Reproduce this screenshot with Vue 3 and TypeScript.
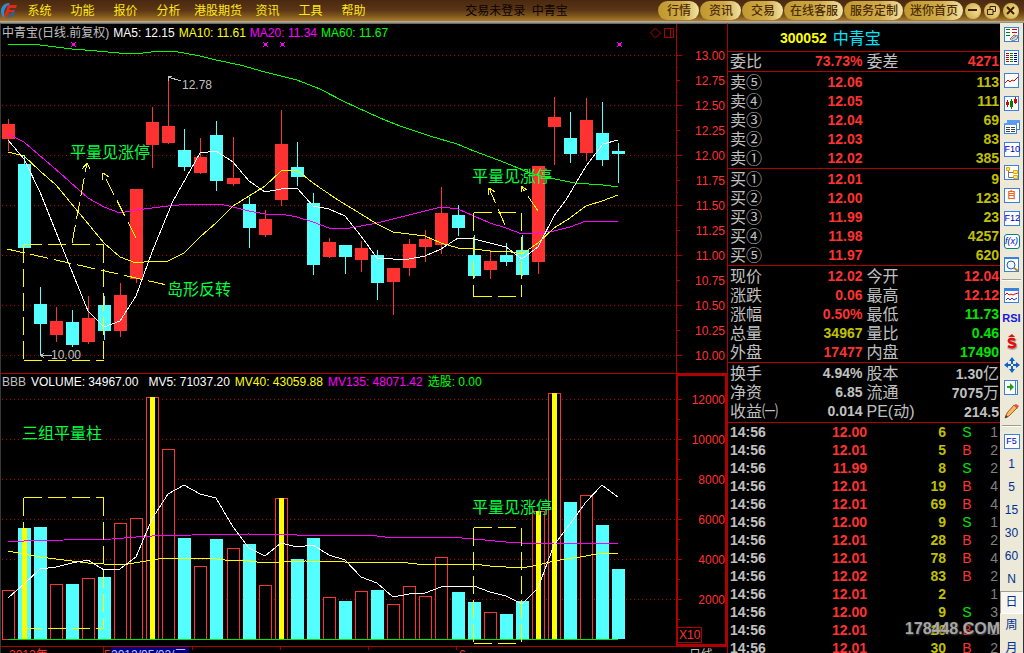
<script setup lang="ts">
type Candle = [up: 0 | 1, high: number, top: number, bottom: number, low: number, volume: number]
type Point = [number, number]

const menus = ['系统', '功能', '报价', '分析', '港股期货', '资讯', '工具', '帮助']
const shortcuts = ['行情', '资讯', '交易', '在线客服', '服务定制', '迷你首页']

const priceLegend = [
  { text: 'MA5: 12.15', tone: 'white' },
  { text: 'MA10: 11.61', tone: 'yellow' },
  { text: 'MA20: 11.34', tone: 'magenta' },
  { text: 'MA60: 11.67', tone: 'green' },
]
const volumeLegend = [
  { text: 'MV5: 71037.20', tone: 'white' },
  { text: 'MV40: 43059.88', tone: 'yellow' },
  { text: 'MV135: 48071.42', tone: 'magenta' },
  { text: '选股: 0.00', tone: 'green' },
]

// Levels are window rows; the last column is the top of the volume bar.
const candles: Candle[] = [
  [1, 119, 124, 139, 151, 590], [0, 155, 164, 248, 248, 528], [0, 287, 304, 324, 355, 527],
  [1, 307, 321, 335, 342, 584], [0, 310, 322, 345, 347, 584], [1, 296, 318, 342, 344, 578],
  [0, 296, 305, 331, 340, 577], [1, 283, 295, 331, 337, 523], [1, 189, 189, 279, 283, 518],
  [1, 107, 122, 145, 168, 397], [1, 79, 126, 143, 144, 449], [0, 129, 150, 167, 171, 538],
  [1, 138, 157, 173, 174, 566], [0, 121, 135, 181, 191, 539], [1, 137, 178, 184, 186, 548],
  [0, 197, 204, 228, 248, 544], [1, 210, 219, 235, 237, 585], [1, 110, 144, 200, 206, 498],
  [0, 142, 167, 177, 186, 559], [0, 193, 203, 265, 275, 538], [1, 238, 242, 257, 258, 597],
  [0, 245, 245, 257, 274, 601], [1, 241, 248, 260, 272, 591], [0, 250, 255, 283, 300, 590],
  [1, 268, 268, 282, 315, 604], [1, 239, 244, 268, 276, 586], [1, 230, 239, 247, 262, 596],
  [1, 187, 213, 245, 254, 557], [0, 205, 215, 228, 236, 592], [0, 235, 255, 276, 278, 602],
  [1, 250, 261, 270, 279, 612], [0, 243, 255, 262, 266, 614], [0, 235, 250, 275, 276, 601],
  [1, 166, 166, 262, 274, 511], [1, 97, 117, 127, 165, 393], [0, 112, 138, 154, 163, 502],
  [1, 98, 120, 153, 161, 495], [0, 102, 133, 160, 166, 525], [0, 143, 151, 154, 183, 569],
]
const marked = [1, 9, 17, 33, 34]
const VOLUME_BASE = 639

const centre = (i: number) => 8 + 16 * i + (i > 13 ? 1 : 0) + (i > 27 ? 1 : 0)
const line = (points: Point[]) => points.map(([x, y]) => `${x},${y}`).join(' ')

const bars = candles.map(([up, high, top, bottom, low, volume], i) => ({
  x: centre(i),
  tone: up ? 'up' : 'down',
  up: up === 1,
  high,
  top,
  bottom,
  low,
  volume,
  marked: marked.includes(i),
}))

const priceLines = [
  { tone: 'green', points: line([[8, 44], [32, 44], [72, 49], [97, 51], [119, 53], [143, 53], [160, 51], [173, 51], [200, 56], [216, 60], [240, 65], [265, 72], [297, 80], [320, 89], [345, 102], [380, 118], [400, 126], [430, 136], [457, 144], [474, 151], [506, 163], [530, 173], [545, 177], [560, 180], [575, 183], [603, 185], [618, 187]]) },
  { tone: 'magenta', points: line([[8, 134], [24, 142], [60, 173], [88, 198], [104, 207], [120, 213], [136, 210], [152, 208], [168, 206], [190, 204], [220, 204], [233, 207], [249, 211], [265, 214], [281, 214], [297, 217], [313, 222], [329, 228], [345, 229], [361, 226], [377, 223], [393, 219], [409, 215], [425, 211], [441, 207], [458, 209], [474, 216], [490, 223], [506, 228], [522, 234], [538, 233], [554, 231], [570, 227], [586, 221], [602, 222], [618, 221]]) },
  { tone: 'yellow', points: line([[8, 152], [24, 156], [40, 171], [56, 185], [104, 243], [120, 257], [136, 263], [152, 261], [168, 261], [184, 253], [200, 237], [216, 223], [233, 206], [249, 196], [265, 186], [281, 171], [297, 170], [313, 183], [338, 200], [361, 214], [377, 224], [393, 232], [409, 234], [425, 236], [441, 243], [458, 248], [474, 249], [490, 251], [506, 251], [522, 254], [538, 243], [554, 228], [570, 218], [586, 206], [602, 201], [618, 195]]) },
  { tone: 'white', points: line([[8, 140], [24, 159], [40, 192], [56, 232], [88, 311], [104, 327], [120, 321], [136, 296], [152, 252], [173, 201], [200, 153], [216, 151], [233, 162], [249, 181], [265, 192], [281, 189], [297, 188], [313, 206], [329, 209], [345, 216], [361, 236], [377, 258], [393, 259], [409, 259], [425, 256], [441, 249], [458, 238], [474, 239], [490, 243], [506, 247], [522, 259], [538, 247], [554, 216], [566, 200], [586, 166], [603, 144], [618, 140]]) },
]
const volumeLines = [
  { tone: 'magenta', points: line([[8, 542], [24, 541], [64, 540], [112, 539], [136, 537], [152, 536], [192, 535], [249, 534], [265, 535], [281, 534], [297, 535], [368, 535], [385, 537], [449, 537], [474, 539], [506, 542], [538, 544], [554, 543], [618, 543]]) },
  { tone: 'yellow', points: line([[8, 551], [24, 554], [40, 557], [88, 563], [104, 564], [128, 564], [152, 560], [165, 558], [208, 558], [225, 560], [249, 561], [265, 563], [281, 562], [305, 561], [345, 562], [400, 562], [425, 565], [474, 564], [490, 566], [522, 568], [538, 565], [554, 561], [586, 556], [602, 553], [618, 553]]) },
  { tone: 'white', points: line([[8, 598], [24, 584], [40, 569], [56, 567], [72, 563], [88, 560], [104, 570], [120, 569], [136, 557], [152, 519], [168, 494], [184, 485], [200, 494], [216, 498], [233, 527], [249, 548], [265, 556], [281, 543], [297, 547], [313, 545], [329, 555], [345, 560], [361, 577], [377, 583], [393, 597], [409, 594], [425, 593], [441, 587], [474, 586], [490, 592], [506, 596], [522, 604], [538, 588], [554, 545], [570, 524], [586, 502], [602, 485], [618, 497]]) },
]

const priceGrid = [55, 105, 155, 205, 255, 305, 355]
const volumeGrid = [399, 439, 479, 519, 559, 599]
const priceScale = Array.from({ length: 13 }, (_, i) => ({ y: 55 + 25 * i, label: (13 - 0.25 * i).toFixed(2), long: i % 2 === 0 }))
const priceMinor = Array.from({ length: 12 }, (_, i) => 67 + 25 * i)
const volumeScale = volumeGrid.map((y, i) => ({ y, label: String(12000 - 2000 * i) }))
const signals = [73, 265, 282, 619]

const asks = [['卖⑤', '12.06', '113'], ['卖④', '12.05', '111'], ['卖③', '12.04', '69'], ['卖②', '12.03', '83'], ['卖①', '12.02', '385']]
const bids = [['买①', '12.01', '9'], ['买②', '12.00', '123'], ['买③', '11.99', '23'], ['买④', '11.98', '4257'], ['买⑤', '11.97', '620']]
const stats = [
  ['现价', '12.02', 'red', '今开', '12.04', 'red'],
  ['涨跌', '0.06', 'red', '最高', '12.12', 'red'],
  ['涨幅', '0.50%', 'red', '最低', '11.73', 'lime'],
  ['总量', '34967', 'olive', '量比', '0.46', 'lime'],
  ['外盘', '17477', 'red', '内盘', '17490', 'lime'],
]
const basics = [
  ['换手', '4.94%', '股本', '1.30', '亿'],
  ['净资', '6.85', '流通', '7075', '万'],
  ['收益㈠', '0.014', 'PE(动)', '214.5', ''],
]
const ticks = [
  ['12.00', '6', 'S', '1'], ['12.01', '5', 'B', '2'], ['11.99', '8', 'S', '2'], ['12.01', '19', 'B', '4'],
  ['12.01', '69', 'B', '4'], ['12.00', '9', 'S', '1'], ['12.01', '28', 'B', '2'], ['12.01', '78', 'B', '4'],
  ['12.02', '83', 'B', '2'], ['12.01', '2', '', '1'], ['12.00', '9', 'S', '3'], ['12.01', '20', 'B', '1'],
  ['12.01', '30', 'B', '2'],
]
const periods = ['1', '5', '15', '30', '60', 'N', '日', '周', '月']
</script>

<template>
  <div class="app">
    <header class="topbar">
      <svg class="logo" width="17" height="17" viewBox="0 0 17 17" aria-hidden="true">
        <path d="M8 1C3 1 0 5 0 9c0 3 1 5 3 7l1-1C2 11 3 5 9 2z" fill="#2a8fd0" />
        <path d="M5 16c5 0 9-3 9-8l-3 1c0 3-2 5-6 7z" fill="#1668b4" />
        <path d="M7 3h9l-1 3H9L8 8h6l-2 2H8l-3 5H3L6 6z" fill="#e5261c" />
      </svg>
      <nav class="menu">
        <button v-for="m in menus" :key="m" type="button">{{ m }}</button>
      </nav>
      <div class="caption">交易未登录&nbsp; 中青宝</div>
      <nav class="pills">
        <button v-for="s in shortcuts" :key="s" type="button">{{ s }}</button>
      </nav>
      <div class="controls">
        <button type="button" aria-label="最小化">
          <svg width="15" height="15" viewBox="0 0 15 15"><path d="M3 7h9" /></svg>
        </button>
        <button type="button" aria-label="还原">
          <svg width="15" height="15" viewBox="0 0 15 15"><path d="M6 6V3.5h5.500v5H9M3.500 6.500h5.500v5H3.500z" /></svg>
        </button>
        <button type="button" aria-label="关闭">
          <svg width="15" height="15" viewBox="0 0 15 15"><path d="M4 4l7 7M11 4l-7 7" /></svg>
        </button>
      </div>
    </header>

    <div class="body">
      <main class="chart">
        <section class="pane price">
          <div class="plot">
            <div class="legend dense">
              <span class="grey">中青宝(日线.前复权)</span>
              <span v-for="l in priceLegend" :key="l.text" :class="l.tone">{{ l.text }}</span>
              <svg class="tools" width="24" height="12" viewBox="0 0 24 12" aria-hidden="true">
                <path d="M5.500 1l5 5-5 5-5-5zM14.500 1.500h9v9h-9zM20.500 1.500v9" />
              </svg>
            </div>
            <svg class="canvas price-canvas">
              <g transform="translate(-1 -41)">
                <line v-for="y in priceGrid" :key="y" class="grid" x1="2" x2="100%" :y1="y + 0.5" :y2="y + 0.5" />
                <g v-for="b in bars" :key="b.x" :class="b.tone">
                  <rect :x="b.x" :y="b.high" width="1" :height="b.low - b.high" />
                  <rect :x="b.x - 6" :y="b.top" width="13" :height="b.bottom - b.top" />
                </g>
                <polyline v-for="l in priceLines" :key="l.tone" :class="['curve', l.tone]" :points="l.points" />
                <g v-for="x in signals" :key="x" class="signal" :transform="`translate(${x} 44)`">
                  <rect x="-1" y="-1" width="3" height="3" />
                  <path d="M-2 -2h1v1h-1zM2 -2h1v1h-1zM-2 2h1v1h-1zM2 2h1v1h-1z" />
                </g>
                <g class="note">
                  <path d="M23.5 244.5H103.5M103.5 244.5V360.5M23.5 244.5V360.5M23.5 360.5H103.5" />
                  <path d="M7 249L167 285M72 243L87 163M136 238L103 173" />
                  <path d="M473.5 212.5H521.5M521.5 212.5V296.5M473.5 212.5V296.5M473.5 296.5H521.5" />
                  <path d="M505 225L489 188M538 211L521 186" />
                </g>
                <g class="head">
                  <path d="M82 169L87 163L90 169M102 180L103 173L109 177M488 195L489 188L495 192M521 192V186L527 190" />
                </g>
                <g class="arrow">
                  <path d="M181 81L168 77M172 76H168V81M52 355.5H41M44 353L41 355.5L44 358" />
                </g>
                <text class="mark" x="182" y="89">12.78</text>
                <text class="mark" x="51" y="359">10.00</text>
                <text class="hint" x="70" y="158">平量见涨停</text>
                <text class="hint" x="472" y="182">平量见涨停</text>
                <text class="hint" x="167" y="295">岛形反转</text>
              </g>
            </svg>
          </div>
          <svg class="axis price-axis">
            <g transform="translate(-676 -24)">
              <path class="rule" d="M676.5 24V374" />
              <g v-for="s in priceScale" :key="s.y">
                <path class="rule" :d="`M677 ${s.y}.5h${s.long ? 5 : 3}`" />
                <text x="725" :y="s.y + 5">{{ s.label }}</text>
              </g>
              <path v-for="y in priceMinor" :key="y" class="rule" :d="`M677 ${y}.5h1`" />
            </g>
          </svg>
        </section>

        <section class="pane volume">
          <div class="plot">
            <div class="legend">
              <span class="grey">BBB</span>
              <span class="white wide">VOLUME: 34967.00</span>
              <span v-for="l in volumeLegend" :key="l.text" :class="l.tone">{{ l.text }}</span>
            </div>
            <svg class="canvas volume-canvas">
              <g transform="translate(-1 -391)">
                <line v-for="y in volumeGrid" :key="y" class="grid" x1="2" x2="100%" :y1="y + 0.5" :y2="y + 0.5" />
                <g v-for="b in bars" :key="b.x">
                  <rect v-if="b.up" class="hollow" :x="b.x - 5.5" :y="b.volume + 0.5" width="12" :height="VOLUME_BASE - b.volume" />
                  <rect v-else class="solid" :x="b.x - 6" :y="b.volume" width="13" :height="VOLUME_BASE - b.volume" />
                  <rect v-if="b.marked" class="strip" :x="b.x - 2" :y="b.volume" width="5" :height="VOLUME_BASE - b.volume" />
                </g>
                <path class="base" d="M8 639.5H618" />
                <polyline v-for="l in volumeLines" :key="l.tone" :class="['curve', l.tone]" :points="l.points" />
                <g class="note">
                  <path d="M23.5 497.5H103.5M103.5 497.5V628.5M23.5 497.5V628.5M23.5 628.5H103.5" />
                  <path d="M473.5 527.5H521.5M521.5 527.5V643.5M473.5 527.5V643.5M473.5 643.5H521.5" />
                </g>
                <text class="hint" x="22" y="439">三组平量柱</text>
                <text class="hint" x="472" y="513">平量见涨停</text>
              </g>
            </svg>
          </div>
          <svg class="axis volume-axis">
            <g transform="translate(-676 -374)">
              <rect class="frame" x="677" y="375" width="49" height="270" />
              <g v-for="s in volumeScale" :key="s.y">
                <path class="rule" :d="`M678 ${s.y}.5h4M678 ${s.y + 20}.5h2`" />
                <text x="725" :y="s.y + 5">{{ s.label }}</text>
              </g>
              <path class="rule" d="M678 627.5H701.5V642.5H678" />
              <text class="unit" x="679" y="639">X10</text>
            </g>
          </svg>
        </section>

        <footer class="dates">
          <span class="year">2012年</span>
          <span class="month">5</span>
          <span class="current">2012/05/02/三</span>
          <span class="tick near"></span>
          <span class="tick"></span>
          <span class="tick"></span>
          <span class="tick"></span>
          <span class="month rest">6</span>
          <span class="period">日线</span>
        </footer>
      </main>

      <aside class="quote">
        <h1><b>300052</b>中青宝</h1>
        <div class="block tight">
          <div class="row">
            <span class="cell"><i>委比</i><b class="red">73.73%</b></span>
            <span class="cell"><i>委差</i><b class="red">4271</b></span>
          </div>
        </div>
        <div class="block">
          <div v-for="a in asks" :key="a[0]" class="row">
            <span class="cell"><i>{{ a[0] }}</i><b class="red">{{ a[1] }}</b></span>
            <span class="cell end"><b class="olive">{{ a[2] }}</b></span>
          </div>
        </div>
        <div class="block">
          <div v-for="a in bids" :key="a[0]" class="row">
            <span class="cell"><i>{{ a[0] }}</i><b class="red">{{ a[1] }}</b></span>
            <span class="cell end"><b class="olive">{{ a[2] }}</b></span>
          </div>
        </div>
        <div class="block">
          <div v-for="s in stats" :key="s[0]" class="row">
            <span class="cell"><i>{{ s[0] }}</i><b :class="s[2]">{{ s[1] }}</b></span>
            <span class="cell"><i>{{ s[3] }}</i><b :class="s[5]">{{ s[4] }}</b></span>
          </div>
        </div>
        <div class="block last">
          <div v-for="s in basics" :key="s[0]" class="row">
            <span class="cell"><i>{{ s[0] }}</i><b>{{ s[1] }}</b></span>
            <span class="cell"><i>{{ s[2] }}</i><b>{{ s[3] }}<i>{{ s[4] }}</i></b></span>
          </div>
        </div>
        <table class="ticks">
          <colgroup>
            <col />
            <col class="c-price" />
            <col class="c-lots" />
            <col class="c-side" />
            <col class="c-count" />
          </colgroup>
          <tbody>
            <tr v-for="(t, i) in ticks" :key="i">
              <td class="time">14:56</td>
              <td class="red">{{ t[0] }}</td>
              <td class="olive">{{ t[1] }}</td>
              <td :class="['side', t[2] === 'S' ? 'lime' : 'red']">{{ t[2] }}</td>
              <td class="count">{{ t[3] }}</td>
            </tr>
          </tbody>
        </table>
        <div class="stamp">178448.COM</div>
      </aside>

      <nav class="toolbar">
        <button type="button" aria-label="报价列表">
          <svg viewBox="0 0 16 16"><rect class="box" x=".5" y=".5" width="14" height="14" /><path d="M2 2.5h4M2 5.5h4M2 8.5h4" stroke="#008000" /><path d="M8 2.5h5M8 5.5h5" stroke="#e00000" /><path d="M6 12l4-4 4 1-1 3-4 2zM8 12l4-3" stroke="#777" fill="#ddd" /></svg>
        </button>
        <button type="button" aria-label="分时列表">
          <svg viewBox="0 0 16 16"><rect class="box" x=".5" y=".5" width="14" height="14" /><path d="M2 3.5h3M2 5.5h3M2 7.5h3M2 9.5h3M2 11.5h3" stroke="#d00000" /><path d="M6 3.5h3M6 5.5h3M6 7.5h3M6 9.5h3M6 11.5h3" stroke="#008000" /><path d="M10 3.5h3M10 5.5h3M10 7.5h3M10 9.5h3M10 11.5h3" stroke="#0000c0" /></svg>
        </button>
        <button type="button" aria-label="走势图">
          <svg viewBox="0 0 16 16"><rect class="box" x=".5" y=".5" width="14" height="14" /><path d="M1 10l3-3 2 2 2-2 2 1 4-4" stroke="#e00000" /></svg>
        </button>
        <button type="button" aria-label="K线图">
          <svg viewBox="0 0 16 16"><rect class="box" x=".5" y=".5" width="14" height="14" /><path d="M3.5 4v7M11.5 1v7" stroke="#e00000" /><path d="M7.5 3v10" stroke="#008000" /><path d="M2 6h3v3H2zM10 3h3v4h-3z" fill="#e00000" /><path d="M6 5h3v6H6z" fill="#008000" /></svg>
        </button>
        <button type="button" aria-label="多窗口">
          <svg viewBox="0 0 16 16"><rect class="box" x="3.5" y="1.5" width="12" height="9" /><path d="M3 1h13v3H3z" fill="#5a9cf0" /><rect class="box" x=".5" y="4.5" width="12" height="10" /><path d="M0 4h13v2H0z" fill="#5a9cf0" /><path d="M2 8.5h4M7 8.5h4M2 10.5h4M7 10.5h4M2 12.5h4M7 12.5h4" stroke="#444" /></svg>
        </button>
        <button type="button"><span class="key">F10</span></button>
        <button type="button" aria-label="树形列表">
          <svg viewBox="0 0 16 16"><rect class="box" x=".5" y=".5" width="14" height="14" /><path d="M4.5 5v7.500H9M5 7.500h4" stroke="#777" /><path d="M2.5 2.5h3v3h-3zM9.5 5.5h4v3h-4zM9.5 10.5h4v3h-4z" fill="#ffe28a" stroke="#f0a800" /></svg>
        </button>
        <button type="button"><span class="key own">自</span></button>
        <button type="button"><span class="key">F12</span></button>
        <button type="button"><span class="key formula">f(x)</span></button>
        <button type="button" aria-label="查找">
          <svg viewBox="0 0 16 16"><rect class="box" x=".5" y=".5" width="14" height="14" /><path d="M0 0h15v2H0z" fill="#3a80e0" /><circle cx="7" cy="8" r="4" fill="#eef6ff" stroke="#2060a0" /><path d="M10 11l4 3" stroke="#c08020" stroke-width="2" /></svg>
        </button>
        <hr />
        <button type="button" aria-label="指标">
          <svg viewBox="0 0 16 16"><rect class="box" x=".5" y=".5" width="14" height="14" /><path d="M0 0h15v3H0z" fill="#3a80e0" /><path d="M1 7l2-2 2 2 2-1 2 1 2-1 3-1" stroke="#e00000" /><path d="M2 12l2-2 2 2 2-2 2 2 3-2" stroke="#3030d0" /></svg>
        </button>
        <button type="button"><span class="rsi">RSI</span></button>
        <button type="button" aria-label="资金">
          <svg viewBox="0 0 16 16"><path d="M12 7C9 5 5 6 6 8s6 1 6 4-5 3-8 1" stroke="#b0a8a0" stroke-width="3" /><path d="M11 6C8 4 4 5 5 7.500s6 1 6 3.500-4 3-7 1" stroke="#e01010" stroke-width="2.500" /><path d="M4 3l4-3 3 3z" fill="#e01010" /></svg>
        </button>
        <button type="button" aria-label="移动">
          <svg viewBox="0 0 16 16"><path d="M8 0l3 4H5zM8 16l-3-4h6zM0 8l4-3v6zM16 8l-4 3V5z" fill="#1060c8" /><path d="M8 3v10M3 8h10" stroke="#1060c8" stroke-width="2" /><path d="M7 7h2v2H7z" fill="#fff" /></svg>
        </button>
        <button type="button" aria-label="展开">
          <svg viewBox="0 0 16 16"><rect class="box" x=".5" y=".5" width="13" height="14" /><path d="M11.5 1v13" stroke="#3a80e0" /><path d="M3 6h3V3l4 4-4 4V8H3z" fill="#20a010" /></svg>
        </button>
        <button type="button" aria-label="画线">
          <svg viewBox="0 0 16 16"><path d="M1 15l2-5 7-8 3 3-8 8z" fill="#f4b860" stroke="#a06020" /><path d="M10 2l2-1 3 2-2 3z" fill="#e05050" /><path d="M1 15l1-3 2 2z" fill="#333" /></svg>
        </button>
        <hr />
        <button type="button"><span class="key">F5</span></button>
        <button v-for="p in periods" :key="p" type="button" :class="{ on: p === '日' }">{{ p }}</button>
      </nav>
    </div>
  </div>
</template>

<style>
html,
body {
  background: #000;
  overflow: hidden;
}
</style>

<style scoped>
.app {
  display: flex;
  flex-direction: column;
  height: 100vh;
  overflow: hidden;
  background: #000;
  color: #c0c0c0;
  font: 12px/17px "Liberation Sans", "Noto Sans CJK SC", sans-serif;
}
button {
  padding: 0;
  border: 0;
  background: none;
  font: inherit;
  color: inherit;
  white-space: nowrap;
}

.topbar {
  flex: none;
  display: flex;
  align-items: center;
  height: 23px;
  box-sizing: border-box;
  padding: 0 5px 2px 1px;
  background: linear-gradient(#4a2910, #5c3616 45%, #80581c 70%, #a87a30 90%, #b8b0a0 92%, #8e8a82);
}
.logo {
  flex: none;
}
.menu,
.caption {
  padding-top: 2px;
}
.menu {
  display: flex;
}
.menu button {
  padding: 0 4px;
  min-width: 43px;
  color: #ffe818;
}
.caption {
  flex: 1;
  text-align: center;
  color: #0c0500;
  white-space: nowrap;
}
.pills {
  display: flex;
  gap: 1px;
}
.pills button {
  height: 19px;
  padding: 1px 5px 0 6px;
  min-width: 41px;
  border-radius: 10px;
  background: linear-gradient(90deg, #c09830, #d0aa48 60%, #f4e4a4);
  color: #4c2c04;
  font-weight: 500;
}
.controls {
  display: flex;
  gap: 3px;
  padding-left: 2px;
}
.controls button {
  width: 16px;
  height: 16px;
  border-radius: 50%;
  background: radial-gradient(circle at 70% 50%, #f0dc90, #c8a23c);
}
.controls svg {
  display: block;
  fill: none;
  stroke: #3c2000;
  stroke-width: 2;
}
.controls button:nth-child(2) svg {
  stroke-width: 1;
}

.body {
  flex: 1;
  min-height: 0;
  display: flex;
}
.chart {
  flex: 1;
  min-width: 0;
  display: flex;
  flex-direction: column;
  border-left: 1px solid #383838;
  border-top: 1px solid #6c6c68;
}
.pane {
  flex: none;
  display: flex;
}
.volume {
  border-top: 1px solid #b00000;
}
.plot {
  flex: 1;
  min-width: 0;
}
.legend {
  display: flex;
  gap: 5px;
  height: 17px;
  box-sizing: border-box;
  padding-left: 1px;
  white-space: nowrap;
}
.legend.dense {
  gap: 4px;
  padding-top: 1px;
}
.legend .wide {
  margin-right: 5px;
}
.tools {
  margin: 2px 2px 0 auto;
  fill: none;
  stroke: #b00000;
}
.canvas,
.axis {
  display: block;
  shape-rendering: crispEdges;
}
.canvas {
  width: 100%;
}
.price-canvas {
  height: 332px;
}
.volume-canvas {
  height: 255px;
}
.axis {
  flex: none;
  width: 51px;
}
.price-axis {
  height: 349px;
}
.volume-axis {
  height: 272px;
}
.axis text {
  fill: #ff3232;
  text-anchor: end;
}
.axis .unit {
  text-anchor: start;
}
.grid {
  stroke: #b00000;
  stroke-dasharray: 1 3;
}
.rule {
  fill: none;
  stroke: #b00000;
}
.frame {
  fill: none;
  stroke: #b00000;
  stroke-width: 2;
}
.up {
  fill: #ff3232;
}
.down,
.solid {
  fill: #54ffff;
}
.hollow {
  fill: #000;
  stroke: #ff3232;
}
.strip {
  fill: #ff0;
}
.base {
  stroke: #00e600;
}
.curve,
.note,
.head,
.arrow {
  fill: none;
}
.note,
.head {
  stroke: #ff0;
}
.note {
  stroke-dasharray: 18 6;
}
.arrow {
  stroke: #c0c0c0;
}
.signal {
  fill: #f0f;
}
.mark {
  fill: #c0c0c0;
}
.hint {
  fill: #00ff40;
  font-size: 16px;
}
.white {
  color: #fff;
  stroke: #fff;
}
.yellow {
  color: #ff0;
  stroke: #ff0;
}
.magenta {
  color: #f0f;
  stroke: #f0f;
}
.green {
  color: #0f0;
  stroke: #0f0;
}

.dates {
  flex: 1;
  display: flex;
  min-height: 0;
  overflow: hidden;
  border-top: 1px solid #b00000;
  color: #ff3232;
}
.dates .year {
  width: 94px;
  padding-left: 8px;
  border-right: 1px solid #b00000;
}
.dates .month {
  width: 7px;
}
.dates .current {
  width: 78px;
  height: 17px;
  background: #000080;
  color: #c0c0ff;
  white-space: nowrap;
}
.dates .tick {
  width: 87px;
  height: 3px;
  border-right: 1px solid #b00000;
}
.dates .near {
  width: 3px;
}
.dates .rest {
  flex: 1;
  padding-left: 2px;
}
.dates .period {
  width: 38px;
  color: #c0c0c0;
}

.quote {
  position: relative;
  flex: none;
  width: 273px;
  box-sizing: border-box;
  border-left: 1px solid #b00000;
  border-top: 1px solid #6c6c68;
  overflow: hidden;
  font-size: 14px;
}
.quote h1 {
  display: flex;
  gap: 6px;
  height: 27px;
  margin: 0;
  padding-left: 52px;
  border-bottom: 1px solid #b00000;
  font-size: 16px;
  line-height: 29px;
  font-weight: 400;
  color: #00e6ff;
}
.quote h1 b {
  font-size: 14px;
  color: #ff0;
}
.block {
  padding-top: 1px;
  border-bottom: 1px solid #b00000;
}
.block.tight {
  padding-top: 0;
}
.block.last {
  padding-bottom: 1px;
}
.row {
  display: grid;
  grid-template-columns: 1fr 1fr;
  gap: 4px;
  padding: 0 1px 0 2px;
  height: 19px;
  line-height: 19px;
}
.cell {
  display: flex;
  justify-content: space-between;
  white-space: nowrap;
}
.cell.end {
  justify-content: flex-end;
}
.cell i {
  font-size: 16px;
  font-style: normal;
  font-weight: 400;
}
.red {
  color: #ff3232;
}
.olive {
  color: #c0c000;
}
.lime {
  color: #00e600;
}
.ticks {
  width: 100%;
  table-layout: fixed;
  border-collapse: collapse;
  font-weight: 700;
  line-height: 18px;
}
.ticks td {
  height: 18px;
  padding: 0;
  text-align: right;
}
.c-price,
.c-lots {
  width: 79px;
}
.c-side {
  width: 42px;
}
.c-count {
  width: 12px;
}
.ticks .time {
  padding-left: 2px;
  text-align: left;
}
.ticks .side {
  text-align: center;
  font-weight: 400;
}
.ticks .count {
  padding-right: 2px;
  color: #808080;
  font-weight: 400;
}
.stamp {
  position: absolute;
  right: 0;
  bottom: 12px;
  font: 700 16px/24px "Liberation Sans", sans-serif;
  color: rgba(190, 190, 190, 0.85);
  text-shadow: 1px 1px 2px #444;
}

.toolbar {
  flex: none;
  width: 24px;
  box-sizing: border-box;
  border-right: 1px solid #303030;
  background: #ece9d8;
  color: #003090;
  overflow: hidden;
}
.toolbar button {
  display: flex;
  align-items: center;
  justify-content: center;
  width: 100%;
  height: 23px;
}
.toolbar svg {
  width: 16px;
  height: 16px;
  fill: none;
}
.toolbar .box {
  fill: #fff;
  stroke: #3a80e0;
}
.toolbar hr {
  height: 1px;
  margin: 3px 2px;
  border: 0;
  border-top: 1px solid #a09c90;
  background: #fff;
}
.toolbar .key {
  width: 14px;
  height: 13px;
  border: 1px solid #3a80e0;
  background: #fff;
  color: #0000c8;
  font-size: 9px;
  line-height: 13px;
  text-align: center;
}
.toolbar .own {
  color: #f06020;
  font-weight: 700;
}
.toolbar .formula {
  border-color: #008080;
  border-radius: 3px;
  font-style: italic;
}
.toolbar .rsi {
  color: #1818e0;
  font-size: 11px;
  font-weight: 700;
}
.toolbar .on {
  box-sizing: border-box;
  border: 1px solid #fff;
  border-top-color: #a09c90;
  border-left-color: #a09c90;
  background: #f8f6f0;
}
</style>
